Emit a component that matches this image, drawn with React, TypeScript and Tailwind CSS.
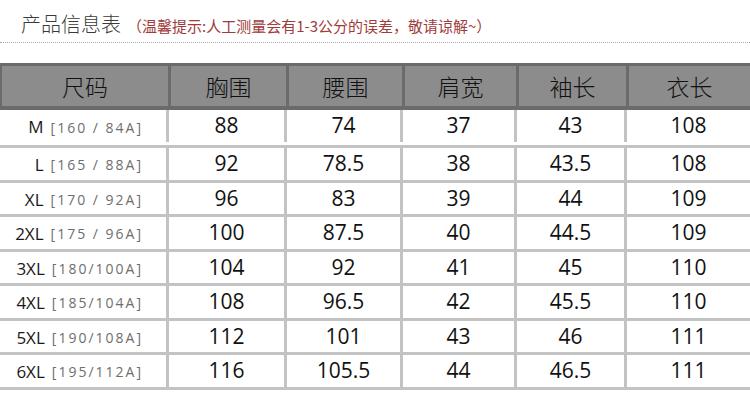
import React from "react";

const headers = ["尺码", "胸围", "腰围", "肩宽", "袖长", "衣长"];
const widths = ["w-[169px]", "w-[118px]", "w-[116px]", "w-[114px]", "w-[110px]", "flex-1"];

const rows: [string, string, string[]][] = [
  ["M", "[160 / 84A]", ["88", "74", "37", "43", "108"]],
  ["L", "[165 / 88A]", ["92", "78.5", "38", "43.5", "108"]],
  ["XL", "[170 / 92A]", ["96", "83", "39", "44", "109"]],
  ["2XL", "[175 / 96A]", ["100", "87.5", "40", "44.5", "109"]],
  ["3XL", "[180/100A]", ["104", "92", "41", "45", "110"]],
  ["4XL", "[185/104A]", ["108", "96.5", "42", "45.5", "110"]],
  ["5XL", "[190/108A]", ["112", "101", "43", "46", "111"]],
  ["6XL", "[195/112A]", ["116", "105.5", "44", "46.5", "111"]],
];

export default function App() {
  return (
    <div
      className="w-[750px] h-[413px] bg-white overflow-hidden"
      style={{ fontFamily: '"Open Sans", "Noto Sans CJK SC", sans-serif' }}
    >
      <div className="h-[43px] border-b border-dotted border-[#aaaaaa] flex items-end pl-[21px] pb-[8px]">
        <span
          className="text-[20px] leading-none text-[#3a3a3a]"
          style={{ fontFamily: '"Noto Sans CJK SC", sans-serif', fontWeight: 300 }}
        >
          产品信息表
        </span>
        <span
          className="ml-[6px] text-[15px] leading-none text-[#a03b3b] mb-[1px]"
          style={{ fontFamily: '"Noto Sans CJK SC", sans-serif' }}
        >
          （温馨提示:人工测量会有1-3公分的误差，敬请谅解~）
        </span>
      </div>
      <div className="mt-[20px]">
        <div className="flex h-[47px] bg-[#8c8c8c] border-t-[3px] border-b-[4px] border-l-[2px] border-[#6b6b6b]">
          {headers.map((h, i) => (
            <div
              key={h}
              className={`${widths[i]} ${i < 5 ? "border-r-[3px] border-[#6b6b6b]" : ""} flex items-center justify-center text-[23px] text-[#111111]`}
              style={{ fontFamily: '"Noto Sans CJK SC", sans-serif', fontWeight: 300 }}
            >
              {h}
            </div>
          ))}
        </div>
        {rows.map(([size, spec, vals], r) => (
          <div
            key={size}
            className={`flex ${r === 0 ? "h-[38px] pb-[3px]" : "h-[34.5px]"} border-b-[3px] border-[#c3c3c3]`}
          >
            <div className="w-[169px] border-r-[3px] border-[#c3c3c3] flex items-center justify-end pr-[23px] pt-[2px]">
              <span className="text-[17px] text-[#1a1a1a] mr-[7px]">{size}</span>
              <span className="text-[14px] text-[#6e6e6e] tracking-[2px]">{spec}</span>
            </div>
            {vals.map((v, i) => (
              <div
                key={i}
                className={`${widths[i + 1]} ${i < 4 ? "border-r-[3px] border-[#c3c3c3]" : ""} flex items-center justify-center text-[21px] text-[#111111]`}
              >
                {v}
              </div>
            ))}
          </div>
        ))}
      </div>
    </div>
  );
}
